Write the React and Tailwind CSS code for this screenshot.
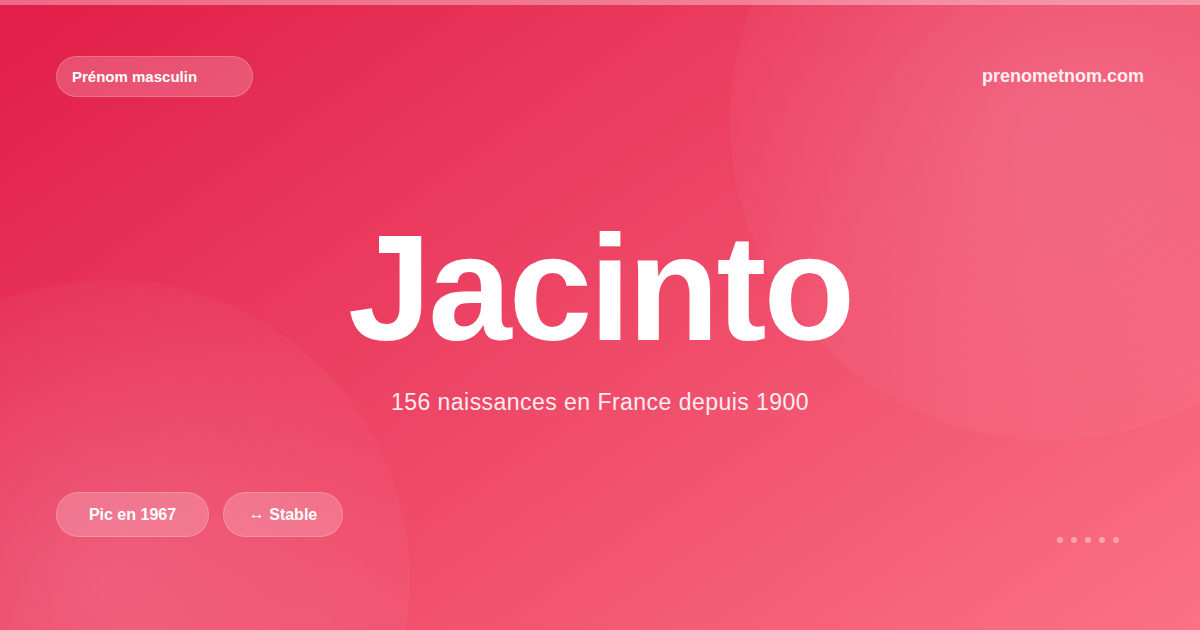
import React from 'react';

function Pill({ children, className }) {
  return (
    <div className={`flex items-center justify-center h-[45px] rounded-[23px] border border-white/20 bg-white/20 text-[16px] font-bold text-white ${className}`}>
      {children}
    </div>
  );
}

export default function App() {
  return (
    <div className="relative w-[1200px] h-[630px] overflow-hidden bg-[linear-gradient(145deg,#e11d48_0%,#fb7185_100%)] font-['Liberation_Sans',Arial,sans-serif] text-white">
      {/* decorative circles */}
      <div className="absolute left-[730px] top-[-200px] w-[640px] h-[640px] rounded-full bg-[radial-gradient(circle,rgba(255,255,255,0.15)_0%,rgba(255,255,255,0.03)_70%)]" />
      <div className="absolute left-[-190px] top-[280px] w-[600px] h-[600px] rounded-full bg-[radial-gradient(circle,rgba(255,255,255,0.15)_0%,rgba(255,255,255,0.03)_70%)]" />

      <div className="relative flex flex-col h-full">
        <div className="h-[5px] bg-white/35" />

        <div className="flex items-center justify-between px-14 pt-[51px]">
          <div className="flex items-center w-[197px] h-[41px] rounded-[21px] border border-white/20 bg-white/20 pl-[15px] pt-px text-[15px] font-bold">
            Prénom masculin
          </div>
          <div className="text-[18px] font-bold text-white/90">prenometnom.com</div>
        </div>

        <div className="flex flex-col items-center mt-[116px]">
          <h1 className="text-[150px] leading-[150px] font-bold tracking-[-3px]">Jacinto</h1>
          <p className="mt-[25px] text-[23px] leading-[28px] tracking-[0.46px] text-white/90">156 naissances en France depuis 1900</p>
        </div>

        <div className="flex items-start justify-between px-14 mt-[76px]">
          <div className="flex items-center gap-[14px]">
            <Pill className="w-[153px]">Pic en 1967</Pill>
            <Pill className="w-[120px]">
              <span className="font-normal relative top-[-1px]">↔</span>&nbsp;Stable
            </Pill>
          </div>
          <div className="flex items-center gap-2 mr-[25px] mt-[45px]">
            <span className="w-[6px] h-[6px] rounded-full bg-white/40" />
            <span className="w-[6px] h-[6px] rounded-full bg-white/40" />
            <span className="w-[6px] h-[6px] rounded-full bg-white/40" />
            <span className="w-[6px] h-[6px] rounded-full bg-white/40" />
            <span className="w-[6px] h-[6px] rounded-full bg-white/40" />
          </div>
        </div>
      </div>
    </div>
  );
}
